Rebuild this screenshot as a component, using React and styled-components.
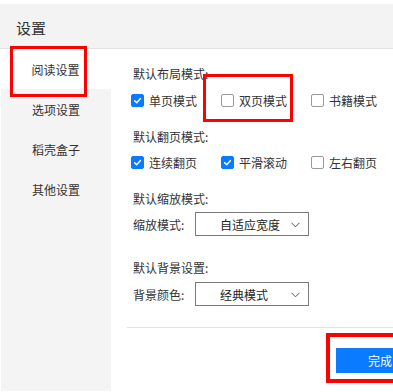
import styled, { createGlobalStyle } from 'styled-components';

const Global = createGlobalStyle`
  html, body {
    margin: 0;
    padding: 0;
    background: #ffffff;
  }
  body {
    font-family: "Noto Sans CJK SC", "Noto Sans", sans-serif;
    color: #333333;
  }
`;

const Page = styled.div`
  position: relative;
  width: 393px;
  height: 392px;
  overflow: hidden;
  padding-top: 4px;
  box-sizing: border-box;
`;

const Header = styled.header`
  height: 45px;
  background: #f3f3f3;
  border-bottom: 1px solid #e3e3e3;
  display: flex;
  align-items: center;
  padding-left: 16px;
  padding-top: 2px;
  box-sizing: border-box;
  font-size: 15px;
  color: #333;
`;

const Body = styled.div`
  display: flex;
  height: 342px;
`;

const Sidebar = styled.nav`
  width: 110px;
  margin-left: 1px;
  flex-shrink: 0;
  background: #f4f4f4;
  display: flex;
  flex-direction: column;
`;

const NavItem = styled.div`
  height: 40px;
  display: flex;
  align-items: center;
  justify-content: center;
  font-size: 12px;
  color: #333;
  background: ${p => (p.$active ? '#ffffff' : 'transparent')};
  margin-left: ${p => (p.$active ? '-1px' : '0')};
`;

const Main = styled.main`
  width: 329px;
  flex-shrink: 0;
  padding: 16px 16px 0 16px;
  box-sizing: border-box;
`;

const Section = styled.section`
  padding-left: 4px;
  margin-bottom: ${p => p.$gap || 19}px;
`;

const Label = styled.div`
  font-size: 12px;
  line-height: 18px;
  padding-left: 2px;
  color: #333;
`;

const CheckRow = styled.div`
  display: grid;
  grid-template-columns: 90px 90px 90px;
  margin-top: ${p => p.$top || 8}px;
  height: 18px;
`;

const CheckItem = styled.label`
  display: flex;
  align-items: center;
  gap: 5px;
  font-size: 12px;
  color: #333;
`;

const Box = styled.span`
  width: 13px;
  height: 13px;
  box-sizing: border-box;
  border-radius: 2px;
  display: flex;
  align-items: center;
  justify-content: center;
  background: ${p => (p.$checked ? '#0a7aff' : '#ffffff')};
  border: 1px solid ${p => (p.$checked ? '#0a7aff' : '#9a9a9a')};
`;

const SelectRow = styled.div`
  display: flex;
  align-items: center;
  margin-top: ${p => p.$top || 4}px;
  padding-left: 2px;
`;

const SelectLabel = styled.span`
  font-size: 12px;
  width: 62px;
  color: #333;
`;

const Select = styled.div`
  position: relative;
  width: 114px;
  height: 24px;
  box-sizing: border-box;
  border: 1px solid #7a7a7a;
  display: flex;
  align-items: center;
  padding-left: 24px;
  font-size: 12px;
  color: #222;
`;

const Chevron = styled.svg`
  position: absolute;
  right: 8px;
  top: 9px;
`;

const Divider = styled.hr`
  border: none;
  border-top: 1px solid #e3e3e3;
  margin: 0;
`;

const Footer = styled.div`
  display: flex;
  justify-content: flex-end;
  margin-top: 20px;
`;

const Button = styled.button`
  width: 88px;
  height: 25px;
  border: none;
  background: #0a7aff;
  color: #ffffff;
  font-family: inherit;
  font-size: 12px;
  padding: 0;
`;

const Mark = styled.div`
  position: absolute;
  left: ${p => p.$x}px;
  top: ${p => p.$y}px;
  width: ${p => p.$w}px;
  height: ${p => p.$h}px;
  border: ${p => p.$t || 3}px solid #ff0000;
  box-sizing: border-box;
  pointer-events: none;
`;

function Check({ checked, children }) {
  return (
    <CheckItem>
      <Box $checked={checked}>
        {checked && (
          <svg width="9" height="9" viewBox="0 0 10 10">
            <path d="M1.8 5.2 L4.1 7.4 L8.3 2.8" fill="none" stroke="#fff" strokeWidth="1.6" strokeLinecap="round" strokeLinejoin="round" />
          </svg>
        )}
      </Box>
      {children}
    </CheckItem>
  );
}

function Dropdown({ value }) {
  return (
    <Select>
      {value}
      <Chevron width="9" height="6" viewBox="0 0 9 6">
        <path d="M0.5 0.8 L4.5 4.8 L8.5 0.8" fill="none" stroke="#555" strokeWidth="1" />
      </Chevron>
    </Select>
  );
}

export default function App() {
  return (
    <Page>
      <Global />
      <Header>设置</Header>
      <Body>
        <Sidebar>
          <NavItem $active>阅读设置</NavItem>
          <NavItem>选项设置</NavItem>
          <NavItem>稻壳盒子</NavItem>
          <NavItem>其他设置</NavItem>
        </Sidebar>
        <Main>
          <Section>
            <Label>默认布局模式:</Label>
            <CheckRow>
              <Check checked>单页模式</Check>
              <Check>双页模式</Check>
              <Check>书籍模式</Check>
            </CheckRow>
          </Section>
          <Section>
            <Label>默认翻页模式:</Label>
            <CheckRow $top={7}>
              <Check checked>连续翻页</Check>
              <Check checked>平滑滚动</Check>
              <Check>左右翻页</Check>
            </CheckRow>
          </Section>
          <Section $gap={23}>
            <Label>默认缩放模式:</Label>
            <SelectRow>
              <SelectLabel>缩放模式:</SelectLabel>
              <Dropdown value="自适应宽度" />
            </SelectRow>
          </Section>
          <Section $gap={21}>
            <Label>默认背景设置:</Label>
            <SelectRow $top={5}>
              <SelectLabel>背景颜色:</SelectLabel>
              <Dropdown value="经典模式" />
            </SelectRow>
          </Section>
          <Divider />
          <Footer>
            <Button>完成</Button>
          </Footer>
        </Main>
      </Body>
      <Mark $x={10} $y={46} $w={77} $h={51} />
      <Mark $x={203} $y={74} $w={90} $h={48} />
      <Mark $x={326} $y={333} $w={80} $h={50} $t={4} />
    </Page>
  );
}
